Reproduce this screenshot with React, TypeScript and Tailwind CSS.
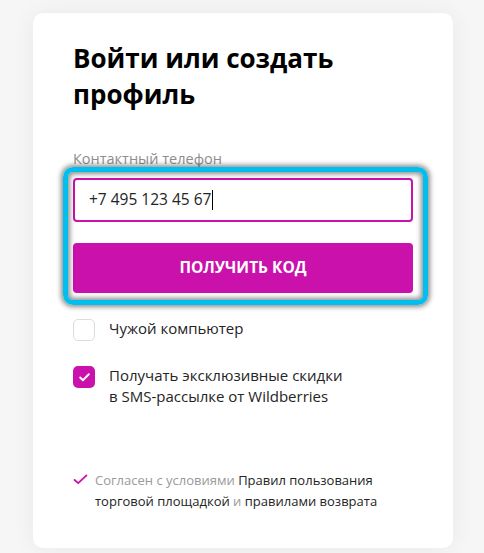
import { Check } from 'lucide-react'

const font = { fontFamily: '"Open Sans", "Noto Sans", "Liberation Sans", sans-serif' }

function Checkbox({ checked, label }: { checked?: boolean; label: React.ReactNode }) {
  return (
    <label className="flex items-start gap-[14px]">
      {checked ? (
        <span className="mt-px flex h-[22px] w-[22px] shrink-0 items-center justify-center rounded-[5px] bg-[#cb11ab]">
          <Check className="h-[13px] w-[13px] text-white" strokeWidth={3.5} />
        </span>
      ) : (
        <span className="mt-px h-[22px] w-[22px] shrink-0 rounded-[5px] border border-[#dcdcdc] bg-white" />
      )}
      <span className="text-[15px] leading-[21px] text-[#242424]">{label}</span>
    </label>
  )
}

export default function App() {
  return (
    <div className="h-[553px] w-[484px] overflow-hidden bg-[#f6f6f6] pt-[13px]" style={font}>
      <div className="ml-[33px] h-[535px] w-[420px] rounded-[10px] bg-white px-[40px] pt-[27px] shadow-[0_0_24px_rgba(0,0,0,0.06)]">
        <h1 className="text-[26px] leading-[36px] font-bold text-black">Войти или создать профиль</h1>

        <div className="mt-[38px] text-[14.5px] leading-[18px] text-[#8e8e8e]">Контактный телефон</div>

        <div className="relative mt-[10px]">
          <div className="pointer-events-none absolute top-[-11px] right-[-15px] bottom-[-12px] left-[-10px] rounded-[10px] border-[5px] border-[#00bfef] shadow-[0_0_5px_2px_rgba(0,0,0,0.45),inset_0_0_5px_2px_rgba(0,0,0,0.45)]" />
          <div className="flex h-[44px] items-center rounded-[4px] border-2 border-[#cb11ab] bg-white px-[14px] text-[15.5px] text-[#242424]">
            +7 495 123 45 67
            <span className="ml-px h-[20px] w-px bg-black" />
          </div>
          <button className="mt-[21px] flex h-[50px] w-full items-center justify-center rounded-[4px] bg-[#cb11ab] text-[15.5px] font-bold text-white">
            ПОЛУЧИТЬ КОД
          </button>
        </div>

        <div className="mt-[25px] flex flex-col gap-[24px]">
          <Checkbox label="Чужой компьютер" />
          <Checkbox
            checked
            label={
              <>
                Получать эксклюзивные скидки
                <br />в SMS-рассылке от Wildberries
              </>
            }
          />
        </div>

        <div className="mt-[63px] flex items-start gap-[7px] text-[13px] leading-[21px]">
          <svg viewBox="0 0 16 12" className="mt-[4px] h-[11px] w-[15px] shrink-0" fill="none">
            <path d="M1.5 6.5 L5.5 10 L14.5 1.5" stroke="#cb11ab" strokeWidth="2" strokeLinecap="round" strokeLinejoin="round" />
          </svg>
          <div className="flex flex-col">
            <div>
              <span className="text-[#9a9a9a]">Согласен с условиями </span>
              <span className="text-[#242424]">Правил пользования</span>
            </div>
            <div>
              <span className="text-[#242424]">торговой площадкой </span>
              <span className="text-[#9a9a9a]">и </span>
              <span className="text-[#242424]">правилами возврата</span>
            </div>
          </div>
        </div>
      </div>
    </div>
  )
}
